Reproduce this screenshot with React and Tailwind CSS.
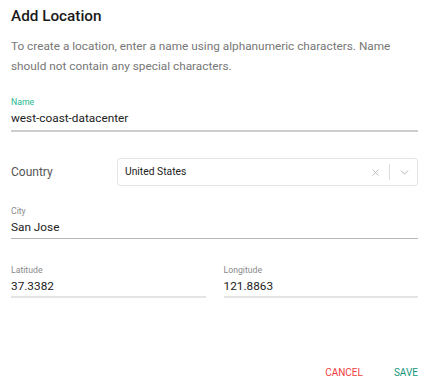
import { X, ChevronDown } from 'lucide-react'

function Field({ label, value, variant = 'plain', className = '' }) {
  const line = {
    focused: 'pb-[4px] border-b-2 border-[#cdcdcd]',
    plain: 'pb-[3px] border-b border-[#b5b5b5]',
    light: 'pb-[2px] border-b-2 border-[#e4e4e4]',
  }[variant]
  return (
    <div className={className}>
      <label
        className={`block text-[8.7px] leading-[12px] ${
          variant === 'focused' ? 'text-[#1cb88f]' : 'text-[#8a8a8a]'
        }`}
      >
        {label}
      </label>
      <div className={`mt-[2px] text-[11.8px] leading-[16px] text-[#222] ${line}`}>{value}</div>
    </div>
  )
}

export default function App() {
  return (
    <div className="w-[432px] h-[390px] bg-white px-[11px] pt-[6px] font-['Roboto',sans-serif] flex flex-col">
      <h1 className="text-[15.3px] leading-[20px] font-medium text-[#1a1a1a]">Add Location</h1>

      <p className="mt-[10px] text-[11.8px] leading-[20px] text-[#777]">
        To create a location, enter a name using alphanumeric characters. Name should not contain any special characters.
      </p>

      <div className="mr-[3px]">
        <Field label="Name" value="west-coast-datacenter" variant="focused" className="mt-[20px]" />

        {/* Country select */}
        <div className="mt-[26px] flex items-center">
          <span className="w-[106px] text-[12px] text-[#555]">Country</span>
          <div className="flex-1 h-[28px] flex items-center rounded-[3px] border border-[#e4e4e4] pl-[7px] pr-[6px]">
            <span className="flex-1 text-[10.3px] text-[#222]">United States</span>
            <X className="w-[11px] h-[11px] text-[#aaa]" strokeWidth={1.6} />
            <div className="mx-[8px] w-px h-[16px] bg-[#ddd]" />
            <ChevronDown className="w-[13px] h-[13px] text-[#aaa]" strokeWidth={1.6} />
          </div>
        </div>

        <Field label="City" value="San Jose" className="mt-[19px]" />

        <div className="mt-[25px] flex gap-[18px]">
          <Field label="Latitude" value="37.3382" variant="light" className="flex-1" />
          <Field label="Longitude" value="121.8863" variant="light" className="flex-1" />
        </div>
      </div>

      <div className="mt-auto mb-[10px] flex justify-end gap-[31px] pr-[3px]">
        <button className="text-[10px] leading-[14px] text-[#ef3b3b] uppercase">Cancel</button>
        <button className="text-[10px] leading-[14px] text-[#16967a] uppercase">Save</button>
      </div>
    </div>
  )
}
